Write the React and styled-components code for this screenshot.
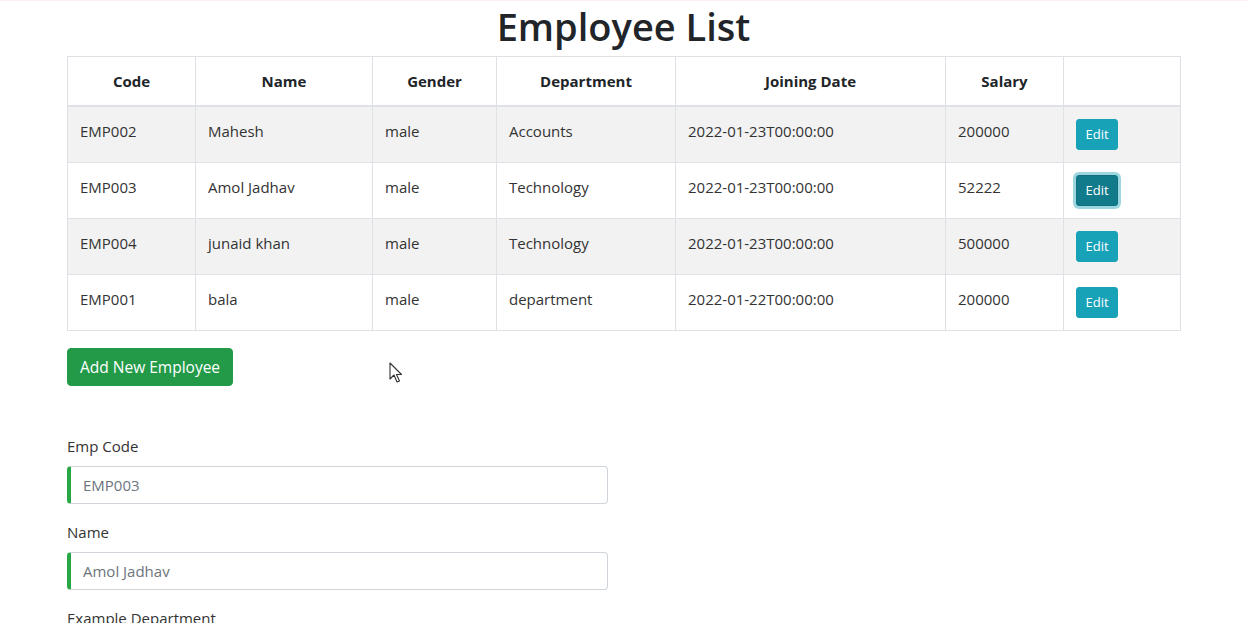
import React from 'react';
import styled, { createGlobalStyle } from 'styled-components';

const GlobalStyle = createGlobalStyle`
  body {
    margin: 0;
    border-top: 1px solid #fcf0f3;
    font-family: "Open Sans", "Noto Sans", sans-serif;
    color: #212529;
    background: #fff;
  }
`;

const employees = [
  { code: 'EMP002', name: 'Mahesh', gender: 'male', dept: 'Accounts', date: '2022-01-23T00:00:00', salary: '200000' },
  { code: 'EMP003', name: 'Amol Jadhav', gender: 'male', dept: 'Technology', date: '2022-01-23T00:00:00', salary: '52222', focused: true },
  { code: 'EMP004', name: 'junaid khan', gender: 'male', dept: 'Technology', date: '2022-01-23T00:00:00', salary: '500000' },
  { code: 'EMP001', name: 'bala', gender: 'male', dept: 'department', date: '2022-01-22T00:00:00', salary: '200000' },
];

const columns = [
  { label: 'Code', width: 128 },
  { label: 'Name', width: 177 },
  { label: 'Gender', width: 124 },
  { label: 'Department', width: 179 },
  { label: 'Joining Date', width: 270 },
  { label: 'Salary', width: 118 },
  { label: '', width: 117 },
];

export default function App() {
  return (
    <>
      <GlobalStyle />
      <Page>
        <Title>Employee List</Title>
        <Table>
          <colgroup>
            {columns.map((c, i) => (
              <col key={i} style={{ width: c.width }} />
            ))}
          </colgroup>
          <thead>
            <tr>
              {columns.map((c, i) => (
                <HeadCell key={i}>{c.label}</HeadCell>
              ))}
            </tr>
          </thead>
          <tbody>
            {employees.map((e, i) => (
              <Row key={e.code} $striped={i % 2 === 0}>
                <Cell>{e.code}</Cell>
                <Cell>{e.name}</Cell>
                <Cell>{e.gender}</Cell>
                <Cell>{e.dept}</Cell>
                <Cell>{e.date}</Cell>
                <Cell>{e.salary}</Cell>
                <Cell>
                  <EditButton $focused={e.focused}>Edit</EditButton>
                </Cell>
              </Row>
            ))}
          </tbody>
        </Table>
        <ActionRow>
          <AddButton>Add New Employee</AddButton>
          <Cursor width="14" height="22" viewBox="0 0 14 22">
            <path d="M1 1 L1 17 L5 13 L8 20 L10.5 19 L7.5 12.5 L12.5 12.5 Z" fill="#fff" stroke="#333" strokeWidth="1.1" strokeLinejoin="round" />
          </Cursor>
        </ActionRow>
        <Form>
          <FormGroup>
            <Label>Emp Code</Label>
            <Input defaultValue="EMP003" readOnly />
          </FormGroup>
          <FormGroup>
            <Label>Name</Label>
            <Input defaultValue="Amol Jadhav" readOnly />
          </FormGroup>
          <FormGroup>
            <Label>Example Department</Label>
            <Input defaultValue="Technology" readOnly />
          </FormGroup>
        </Form>
      </Page>
    </>
  );
}

const Page = styled.div`
  width: 1113px;
  margin: 0 auto;
  padding-bottom: 40px;
`;

const Title = styled.h1`
  margin: 0 0 6px;
  padding-top: 1px;
  text-align: center;
  font-size: 38px;
  font-weight: 600;
  line-height: 48px;
  color: #212529;
`;

const Table = styled.table`
  width: 100%;
  border-collapse: collapse;
  table-layout: fixed;
  font-size: 15px;
  border: 1px solid #dee2e6;
`;

const HeadCell = styled.th`
  height: 49px;
  padding: 12px;
  box-sizing: border-box;
  border: 1px solid #dee2e6;
  border-bottom: 2px solid #dee2e6;
  font-weight: 700;
  text-align: center;
  vertical-align: middle;
  color: #212529;
`;

const Row = styled.tr`
  background: ${(p) => (p.$striped ? '#f2f2f2' : '#fff')};
`;

const Cell = styled.td`
  height: 56px;
  box-sizing: border-box;
  padding: 12px;
  border: 1px solid #dee2e6;
  vertical-align: top;
  line-height: 24px;
  color: #333;
`;

const EditButton = styled.button`
  display: block;
  height: 31px;
  width: 42px;
  padding: 0;
  font-family: inherit;
  font-size: 13px;
  color: #fff;
  background: ${(p) => (p.$focused ? '#117a8b' : '#17a2b8')};
  border: 1px solid ${(p) => (p.$focused ? '#10707f' : '#17a2b8')};
  border-radius: 3px;
  box-shadow: ${(p) => (p.$focused ? '0 0 0 3px rgba(58,176,195,.5)' : 'none')};
  cursor: pointer;
`;

const ActionRow = styled.div`
  position: relative;
  margin-top: 17px;
  display: flex;
  align-items: center;
`;

const AddButton = styled.button`
  height: 38px;
  padding: 0 12px;
  font-family: inherit;
  font-size: 15.5px;
  color: #fff;
  background: #229a48;
  border: 1px solid #229a48;
  border-radius: 4px;
  cursor: pointer;
`;

const Cursor = styled.svg`
  position: absolute;
  left: 322px;
  top: 14px;
`;

const Form = styled.form`
  width: 541px;
  margin-top: 48px;
`;

const FormGroup = styled.div`
  margin-bottom: 16px;
`;

const Label = styled.label`
  display: block;
  margin-bottom: 8px;
  font-size: 15px;
  line-height: 24px;
  color: #333;
`;

const Input = styled.input`
  display: block;
  width: 100%;
  box-sizing: border-box;
  height: 38px;
  padding: 6px 12px;
  font-family: inherit;
  font-size: 15px;
  color: #6c757d;
  background: #fff;
  border: 1px solid #ced4da;
  border-left: 4px solid #28a745;
  border-radius: 4px;
  outline: none;
`;
